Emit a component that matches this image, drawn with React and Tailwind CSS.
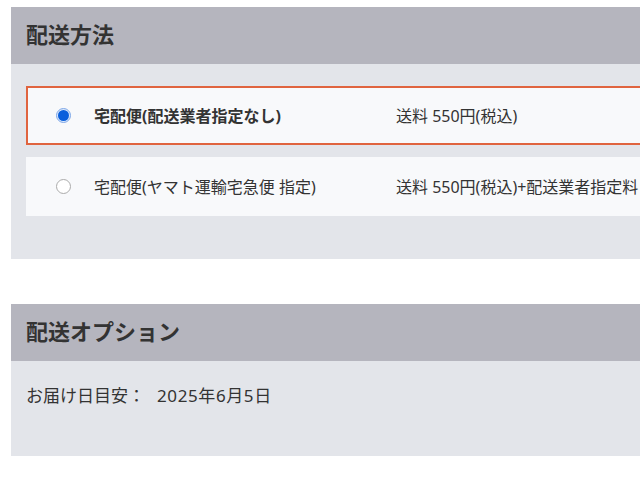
import React from "react";

const font = { fontFamily: '"Noto Sans", "Noto Sans CJK JP", sans-serif' };

function Radio({ checked }) {
  if (checked) {
    return (
      <span className="flex h-[15px] w-[15px] shrink-0 items-center justify-center rounded-full border border-[#7fa8e8] bg-[#dbe8fb]">
        <span className="h-[11px] w-[11px] rounded-full bg-[#0a5fdc]" />
      </span>
    );
  }
  return <span className="h-[15px] w-[15px] shrink-0 rounded-full border border-[#ababab] bg-white" />;
}

function Option({ checked, label, price }) {
  return (
    <div
      className={
        "flex h-[59px] items-center border-2 bg-[#f8f9fb] pl-[28px] text-[16px] text-[#333] " +
        (checked ? "border-[#e0643f]" : "border-[#f8f9fb]")
      }
    >
      <Radio checked={checked} />
      <span className={"ml-[23px] w-[302px] shrink-0 whitespace-nowrap " + (checked ? "font-bold" : "")}>{label}</span>
      <span className="whitespace-nowrap">{price}</span>
    </div>
  );
}

export default function App() {
  return (
    <div className="h-[477px] w-[640px] overflow-hidden bg-white" style={font}>
      <div className="ml-[11px] mt-[7px] w-[700px]">
        <div className="flex h-[57px] items-center bg-[#b5b5be] pb-[3px] pl-[15px] text-[22px] font-bold text-[#333]">配送方法</div>
        <div className="flex flex-col gap-[12px] bg-[#e3e5ea] pb-[43px] pl-[15px] pt-[22px]">
          <Option checked label="宅配便(配送業者指定なし)" price="送料 550円(税込)" />
          <Option label="宅配便(ヤマト運輸宅急便 指定)" price="送料 550円(税込)+配送業者指定料 110円(税込)" />
        </div>
      </div>
      <div className="ml-[11px] mt-[45px] w-[700px]">
        <div className="flex h-[57px] items-center bg-[#b5b5be] pb-[3px] pl-[15px] text-[22px] font-bold text-[#333]">配送オプション</div>
        <div className="flex h-[95px] items-start bg-[#e3e5ea] pl-[15px] pt-[22px] text-[17px] text-[#333]">
          <span>お届け日目安：</span>
          <span className="ml-[12px] tracking-[0.6px]">2025年6月5日</span>
        </div>
      </div>
    </div>
  );
}
